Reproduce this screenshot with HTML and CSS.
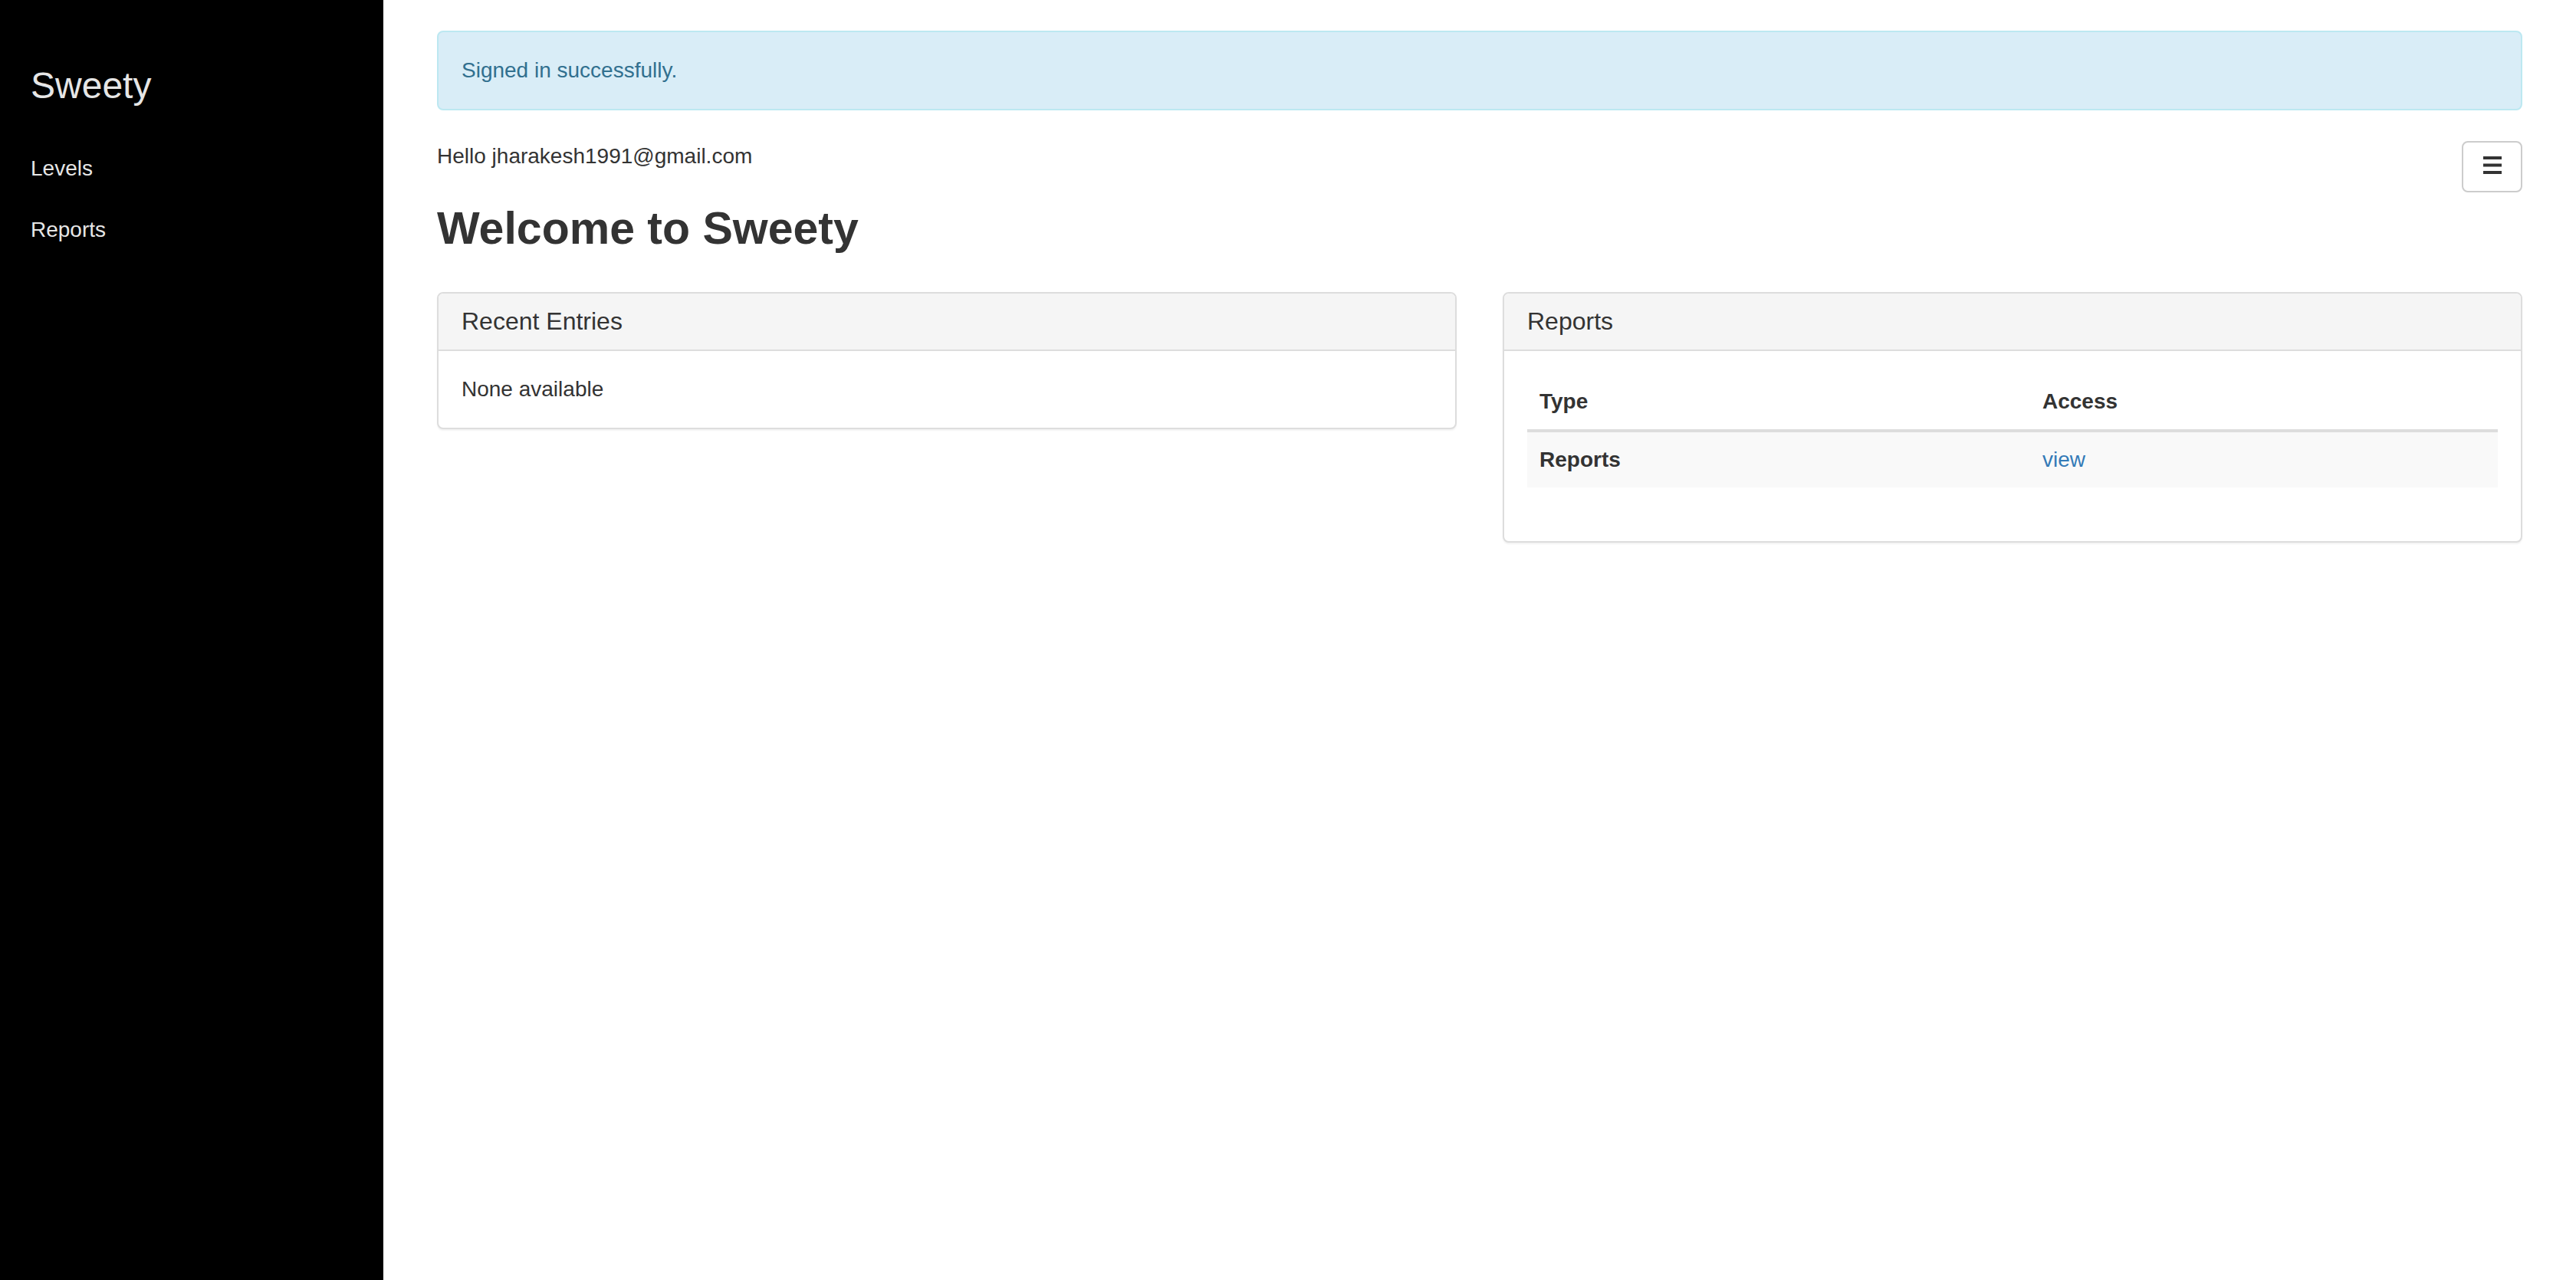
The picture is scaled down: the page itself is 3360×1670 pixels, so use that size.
FILE: index.html
```html
<!DOCTYPE html>
<html lang="en">
<head>
<meta charset="utf-8">
<title>Sweety</title>
<link rel="stylesheet" href="styles.css">
</head>
<body>
<div class="layout">
  <aside class="sidebar">
    <div class="brand">Sweety</div>
    <ul class="nav">
      <li><a href="#">Levels</a></li>
      <li><a href="#">Reports</a></li>
    </ul>
  </aside>
  <main class="main">
    <div class="alert">Signed in successfully.</div>
    <div class="topbar">
      <p class="hello">Hello jharakesh1991@gmail.com</p>
      <button class="menu-btn" type="button" aria-label="Menu">
        <svg class="menu-icon" width="24" height="23" viewBox="0 0 24 23">
          <rect x="0" y="0" width="24" height="4" fill="#333"/>
          <rect x="0" y="9.5" width="24" height="4" fill="#333"/>
          <rect x="0" y="19" width="24" height="4" fill="#333"/>
        </svg>
      </button>
    </div>
    <h2 class="title">Welcome to Sweety</h2>
    <div class="panels">
      <section class="panel">
        <div class="panel-heading"><h3 class="panel-title">Recent Entries</h3></div>
        <div class="panel-body">None available</div>
      </section>
      <section class="panel">
        <div class="panel-heading"><h3 class="panel-title">Reports</h3></div>
        <div class="panel-body">
          <table class="table">
            <thead>
              <tr><th class="col-type">Type</th><th>Access</th></tr>
            </thead>
            <tbody>
              <tr><td class="strong">Reports</td><td><a class="link" href="#">view</a></td></tr>
            </tbody>
          </table>
        </div>
      </section>
    </div>
  </main>
</div>
</body>
</html>
```
FILE: styles.css
```css
html, body {
  margin: 0;
  padding: 0;
}
body {
  font-family: "Liberation Sans", Arial, Helvetica, sans-serif;
  font-size: 28px;
  line-height: 40px;
  color: #333;
  background: #fff;
}
.layout {
  display: flex;
  min-height: 1670px;
}
.sidebar {
  width: 500px;
  flex: none;
  background: #000;
  box-sizing: border-box;
  padding: 85px 40px 0;
}
.brand {
  font-size: 48px;
  line-height: 53px;
  color: #e6e6e6;
}
.nav {
  list-style: none;
  margin: 42px 0 0;
  padding: 0;
}
.nav a {
  display: block;
  padding: 20px 0;
  color: #e6e6e6;
  text-decoration: none;
}
.main {
  flex: 1;
  min-width: 0;
  padding: 40px 70px 0;
}
.alert {
  background: #d9edf7;
  border: 2px solid #bce8f1;
  color: #31708f;
  border-radius: 8px;
  padding: 30px;
  margin-bottom: 40px;
}
.topbar {
  display: flex;
  justify-content: space-between;
  align-items: flex-start;
}
.hello {
  margin: 0;
}
.menu-btn {
  width: 79px;
  height: 67px;
  box-sizing: border-box;
  border: 2px solid #ccc;
  border-radius: 8px;
  background: #fff;
  padding: 0;
  display: flex;
  align-items: center;
  justify-content: center;
}
.menu-icon {
  display: block;
  margin-bottom: 4px;
}
.title {
  font-size: 59px;
  line-height: 66px;
  font-weight: bold;
  margin: 14px 0 50px;
  color: #333;
}
.panels {
  display: flex;
  gap: 60px;
  align-items: flex-start;
}
.panel {
  flex: 1;
  min-width: 0;
  border: 2px solid #ddd;
  border-radius: 8px;
  background: #fff;
  box-shadow: 0 2px 2px rgba(0, 0, 0, 0.05);
}
.panel-heading {
  background: #f5f5f5;
  border-bottom: 2px solid #ddd;
  border-radius: 6px 6px 0 0;
  padding: 19px 30px;
}
.panel-title {
  margin: 0;
  font-size: 32px;
  line-height: 35px;
  font-weight: normal;
  color: #333;
}
.panel-body {
  padding: 30px;
}
.table {
  width: 100%;
  border-collapse: collapse;
  border-spacing: 0;
  margin-bottom: 40px;
}
.table th {
  text-align: left;
  font-weight: bold;
  padding: 16px;
  border-bottom: 4px solid #ddd;
  vertical-align: bottom;
}
.table td {
  padding: 16px;
}
.table tbody tr {
  background: #f9f9f9;
}
.col-type {
  width: 624px;
}
.strong {
  font-weight: bold;
}
.link {
  color: #337ab7;
  text-decoration: none;
}
```
